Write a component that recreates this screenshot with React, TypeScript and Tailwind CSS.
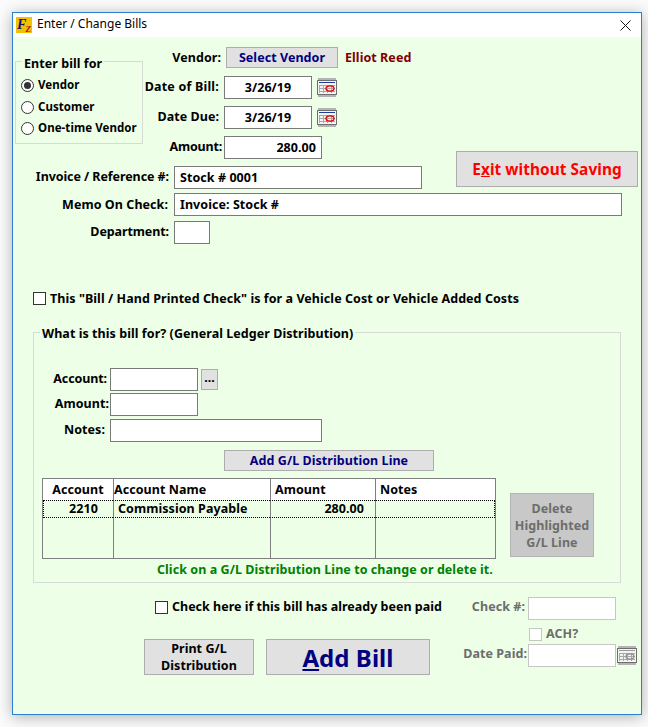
type TextBoxProps = {
  value?: string;
  width: string;
  align?: string;
  disabled?: boolean;
};

const TextBox = ({ value = "", width, align = "text-left", disabled = false }: TextBoxProps) => {
  return (
    <input
      readOnly
      value={value}
      className={`${width} ${align} h-[23px] shrink-0 bg-white px-[5px] outline-none border ${
        disabled ? "border-[#c6c6c6]" : "border-[#7a7a7a]"
      }`}
    />
  );
};

const CalendarIcon = ({ disabled = false }: { disabled?: boolean }) => {
  const red = disabled ? "#8f8f8f" : "#e00000";
  const blue = disabled ? "#9a9a9a" : "#1c3f9c";
  return (
    <svg width="20" height="19" viewBox="0 0 20 19" className="shrink-0">
      <rect x="1" y="0" width="18" height="2" fill="#b4b4b4" />
      <rect x="1" y="17" width="18" height="2" fill="#b4b4b4" />
      <rect x="0.5" y="2.5" width="19" height="14" fill="#f4f4f4" stroke="#6e6e6e" />
      <rect x="2" y="4" width="16" height="1" fill={blue} />
      <path
        d="M2.5 7v8M6.5 7v8M10.5 7v8M14.5 7v8M2 7.5h16M2 10.5h16M2 13.5h16"
        stroke="#a8a8a8"
        fill="none"
      />
      <ellipse cx="13" cy="10.5" rx="4" ry="2.6" fill="none" stroke={red} strokeWidth="1.3" />
    </svg>
  );
};

const Logo = () => {
  return (
    <svg width="16" height="16" viewBox="0 0 16 16" className="shrink-0">
      <rect width="16" height="16" fill="#f2c200" />
      <text x="1" y="12" fontFamily="Liberation Serif" fontStyle="italic" fontWeight="700" fontSize="14" fill="#14147a">
        F
      </text>
      <text x="9.5" y="15" fontFamily="Liberation Serif" fontStyle="italic" fontWeight="700" fontSize="9" fill="#b01030">
        Z
      </text>
    </svg>
  );
};

const CheckBox = ({ disabled = false }: { disabled?: boolean }) => {
  return (
    <span
      className={`block size-[13px] shrink-0 bg-white border ${
        disabled ? "border-[#c6c6c6]" : "border-[#333333]"
      }`}
    />
  );
};

const Radio = ({ checked = false }: { checked?: boolean }) => {
  return (
    <span className="flex size-[13px] shrink-0 items-center justify-center rounded-full border border-[#333333] bg-white">
      {checked && <span className="size-[7px] rounded-full bg-[#333333]" />}
    </span>
  );
};

const Button = ({ className, children }: { className: string; children: React.ReactNode }) => {
  return (
    <button className={`flex shrink-0 items-center justify-center border border-[#adadad] bg-[#e1e1e1] text-center ${className}`}>
      {children}
    </button>
  );
};

export default function App() {
  return (
    <div className="h-[727px] w-[648px] overflow-hidden bg-[#fbfbfb] pl-[12px] pt-[12px] font-['Noto_Sans',sans-serif] text-[12.5px] leading-[16px] font-bold tracking-[0.06px] text-black">
      <div className="flex h-[703px] w-[630px] flex-col border border-[#2b7fd0] bg-white shadow-[0_2px_14px_rgba(0,0,0,0.3)]">
        <div className="flex h-[24px] shrink-0 items-center bg-white pl-[3px] pr-[10px]">
          <Logo />
          <span className="mb-[2px] ml-[5px] text-[12px] font-normal tracking-normal">Enter / Change Bills</span>
          <svg width="11" height="11" viewBox="0 0 11 11" className="ml-auto">
            <path d="M0.5 0.5l10 10M10.5 0.5l-10 10" stroke="#111111" fill="none" />
          </svg>
        </div>

        <div className="flex flex-1 flex-col bg-[#eeffe8]">
          <div className="ml-[2px] mt-[10px] flex">
            <div className="w-[407px]">
              <div className="flex">
                <fieldset className="mt-[6px] h-[91px] w-[128px] min-w-0 shrink-0 border border-[#d5dcd5] pl-[5px]">
                  <legend className="relative top-[3px] ml-[1px] px-[2px]">Enter bill for</legend>
                  <div className="mt-[8px] flex items-center gap-[4px] text-[11.5px]">
                    <Radio checked />
                    <span>Vendor</span>
                  </div>
                  <div className="mt-[6px] flex items-center gap-[4px] text-[11.5px]">
                    <Radio />
                    <span>Customer</span>
                  </div>
                  <div className="mt-[5px] flex items-center gap-[4px] whitespace-nowrap text-[11.5px]">
                    <Radio />
                    <span>One-time Vendor</span>
                  </div>
                </fieldset>
                <div className="w-[279px]">
                  <div className="flex h-[21px] items-center">
                    <span className="w-[78px] text-right">Vendor:</span>
                    <Button className="ml-[5px] h-[21px] w-[112px] text-[#000080]">Select Vendor</Button>
                    <span className="ml-[7px] text-[#800000]">Elliot Reed</span>
                  </div>
                  <div className="mt-[8px] flex items-center">
                    <span className="w-[76px] whitespace-nowrap pb-[2px] text-right tracking-[0.2px]">Date of Bill:</span>
                    <span className="ml-[5px]">
                      <TextBox value="3/26/19" width="w-[88px]" align="text-center" />
                    </span>
                    <span className="ml-[5px]">
                      <CalendarIcon />
                    </span>
                  </div>
                  <div className="mt-[7px] flex items-center">
                    <span className="w-[76px] pb-[2px] text-right">Date Due:</span>
                    <span className="ml-[5px]">
                      <TextBox value="3/26/19" width="w-[88px]" align="text-center" />
                    </span>
                    <span className="ml-[5px]">
                      <CalendarIcon />
                    </span>
                  </div>
                  <div className="mt-[7px] flex items-center">
                    <span className="w-[79px] pb-[2px] text-right tracking-[-0.2px]">Amount:</span>
                    <span className="ml-[2px]">
                      <TextBox value="280.00" width="w-[98px]" align="text-right" />
                    </span>
                  </div>
                </div>
              </div>
              <div className="mt-[7px] flex items-center">
                <span className="w-[154px] pb-[2px] text-right tracking-[-0.08px]">Invoice / Reference #:</span>
                <span className="ml-[5px]">
                  <TextBox value="Stock # 0001" width="w-[248px]" />
                </span>
              </div>
            </div>
            <Button className="ml-[34px] mt-[104px] h-[36px] w-[182px] pt-[2px] text-[15.4px] text-[#ff0000]">
              <span>
                E<span className="underline">x</span>it without Saving
              </span>
            </Button>
          </div>

          <div className="ml-[2px] mt-[4px] flex items-center">
            <span className="w-[153px] text-right">Memo On Check:</span>
            <span className="ml-[6px]">
              <TextBox value="Invoice: Stock #" width="w-[448px]" />
            </span>
          </div>
          <div className="ml-[2px] mt-[5px] flex items-center">
            <span className="w-[154px] pb-[1px] text-right tracking-[-0.1px]">Department:</span>
            <span className="ml-[5px]">
              <TextBox width="w-[36px]" />
            </span>
          </div>

          <div className="ml-[20px] mt-[47px] flex h-[14px] items-center gap-[4px]">
            <CheckBox />
            <span className="pt-[1px]">This "Bill / Hand Printed Check" is for a Vehicle Cost or Vehicle Added Costs</span>
          </div>

          <fieldset className="ml-[20px] mt-[19px] h-[259px] w-[588px] border border-[#d5dcd5]">
            <legend className="relative top-[2px] ml-[6px] px-[2px]">What is this bill for? (General Ledger Distribution)</legend>
            <div className="mt-[28px] flex items-center">
              <span className="w-[73px] pb-[1px] text-right tracking-[-0.1px]">Account:</span>
              <span className="ml-[3px]">
                <TextBox width="w-[88px]" />
              </span>
              <Button className="ml-[3px] h-[21px] w-[17px] items-end pb-[3px]">...</Button>
            </div>
            <div className="mt-[2px] flex items-center">
              <span className="w-[75px] pb-[1px] text-right">Amount:</span>
              <span className="ml-[1px]">
                <TextBox width="w-[88px]" />
              </span>
            </div>
            <div className="mt-[3px] flex items-center">
              <span className="w-[71px] pb-[1px] text-right">Notes:</span>
              <span className="ml-[5px]">
                <TextBox width="w-[212px]" />
              </span>
            </div>
            <Button className="ml-[190px] mt-[8px] h-[21px] w-[210px] text-[#000080]">Add G/L Distribution Line</Button>

            <div className="ml-[8px] mt-[7px] flex">
              <div className="h-[81px] w-[454px] border border-[#7f7f7f]">
                <table className="h-[79px] w-[452px] table-fixed border-separate border-spacing-0">
                  <colgroup>
                    <col className="w-[70px]" />
                    <col className="w-[157px]" />
                    <col className="w-[105px]" />
                    <col className="w-[120px]" />
                  </colgroup>
                  <thead>
                    <tr className="h-[21px] bg-white">
                      <th className="text-center font-bold">Account</th>
                      <th className="border-l border-[#7f7f7f] text-left font-bold">Account Name</th>
                      <th className="border-l border-[#7f7f7f] pl-[4px] text-left font-bold">Amount</th>
                      <th className="border-l border-[#7f7f7f] pl-[4px] text-left font-bold">Notes</th>
                    </tr>
                  </thead>
                  <tbody>
                    <tr className="h-[17px]">
                      <td className="border-y border-l border-dotted border-black pl-[25px]">2210</td>
                      <td className="border-y border-l border-dotted border-black border-l-[#7f7f7f] pl-[4px] [border-left-style:solid]">
                        Commission Payable
                      </td>
                      <td className="border-y border-l border-dotted border-black border-l-[#7f7f7f] pr-[11px] text-right [border-left-style:solid]">
                        280.00
                      </td>
                      <td className="border-y border-x border-dotted border-black border-l-[#7f7f7f] [border-left-style:solid]" />
                    </tr>
                    <tr>
                      <td />
                      <td className="border-l border-[#7f7f7f]" />
                      <td className="border-l border-[#7f7f7f]" />
                      <td className="border-l border-[#7f7f7f]" />
                    </tr>
                  </tbody>
                </table>
              </div>
              <button className="ml-[14px] mt-[15px] h-[64px] w-[84px] shrink-0 border border-[#b4b4b4] bg-[#c8c8c8] text-center leading-[17px] text-[#6d6d6d]">
                Delete
                <br />
                Highlighted
                <br />
                G/L Line
              </button>
            </div>
            <p className="ml-[123px] mt-[3px] text-[#008000]">Click on a G/L Distribution Line to change or delete it.</p>
          </fieldset>

          <div className="flex">
            <div className="w-[450px]">
              <div className="ml-[142px] mt-[17px] flex h-[14px] items-center gap-[4px]">
                <CheckBox />
                <span className="tracking-[0px]">Check here if this bill has already been paid</span>
              </div>
              <div className="ml-[131px] mt-[25px] flex gap-[12px]">
                <Button className="h-[36px] w-[110px] leading-[17px]">
                  <span>
                    Print G/L
                    <br />
                    Distribution
                  </span>
                </Button>
                <Button className="h-[36px] w-[164px] pt-[1px] text-[24px] text-[#000080]">
                  <span>
                    <span className="underline">A</span>dd Bill
                  </span>
                </Button>
              </div>
            </div>
            <div className="text-[#6d6d6d]">
              <div className="mt-[14px] flex items-center">
                <span className="w-[62px] pb-[3px] text-right">Check #:</span>
                <span className="ml-[3px]">
                  <TextBox width="w-[88px]" disabled />
                </span>
              </div>
              <div className="ml-[66px] mt-[7px] flex h-[14px] items-center gap-[4px]">
                <CheckBox disabled />
                <span>ACH?</span>
              </div>
              <div className="mt-[3px] flex items-center">
                <span className="w-[64px] pb-[3px] text-right">Date Paid:</span>
                <span className="ml-[1px]">
                  <TextBox width="w-[88px]" disabled />
                </span>
                <span className="ml-[1px]">
                  <CalendarIcon disabled />
                </span>
              </div>
            </div>
          </div>
        </div>
      </div>
    </div>
  );
}
